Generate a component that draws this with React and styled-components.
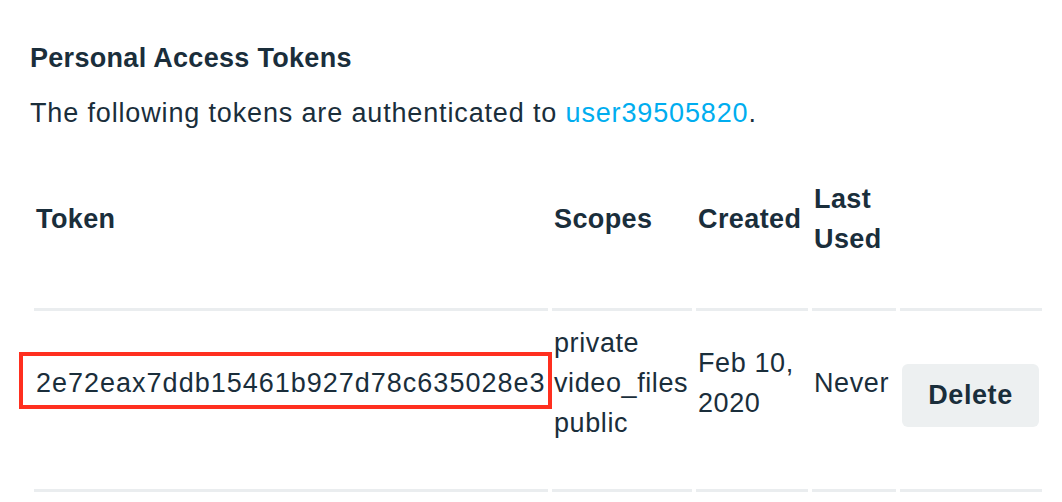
import React from "react";
import styled, { createGlobalStyle } from "styled-components";

const GlobalStyle = createGlobalStyle`
  body {
    margin: 0;
    background: #fff;
    color: #1a2e3b;
    font-family: "Liberation Sans", Arial, sans-serif;
  }
`;

const tokens = [
  {
    id: "2e72eax7ddb15461b927d78c635028e3",
    scopes: ["private", "video_files", "public"],
    created: "Feb 10, 2020",
    lastUsed: "Never",
  },
];

const App = () => {
  return (
    <Page>
      <GlobalStyle />
      <Title>Personal Access Tokens</Title>
      <Intro>
        The following tokens are authenticated to{" "}
        <UserLink href="#">user39505820</UserLink>.
      </Intro>
      <TokenTable>
        <thead>
          <tr>
            <HeaderCell $width={514}>Token</HeaderCell>
            <HeaderCell $width={140}>Scopes</HeaderCell>
            <HeaderCell $width={112}>Created</HeaderCell>
            <HeaderCell $width={84}>Last Used</HeaderCell>
            <HeaderCell $width={142} />
          </tr>
        </thead>
        <tbody>
          {tokens.map((token) => (
            <tr key={token.id}>
              <Cell>
                {/* the token is highlighted with a red annotation box */}
                <TokenValue>{token.id}</TokenValue>
              </Cell>
              <Cell>
                {token.scopes.map((scope) => (
                  <Scope key={scope}>{scope}</Scope>
                ))}
              </Cell>
              <Cell $wrap>{token.created}</Cell>
              <Cell>{token.lastUsed}</Cell>
              <Cell>
                <DeleteButton>Delete</DeleteButton>
              </Cell>
            </tr>
          ))}
        </tbody>
      </TokenTable>
    </Page>
  );
};

export default App;

const Page = styled.div`
  padding: 38px 0 0 30px;
`;

const Title = styled.h2`
  margin: 0;
  font-size: 27px;
  line-height: 40px;
  font-weight: 700;
  letter-spacing: 0.3px;
`;

const Intro = styled.p`
  margin: 15px 0 0;
  font-size: 27px;
  line-height: 40px;
  letter-spacing: 0.85px;
`;

const UserLink = styled.a`
  color: #00adef;
  text-decoration: none;
`;

const TokenTable = styled.table`
  margin-top: 26px;
  border-collapse: separate;
  border-spacing: 4px 0;
  table-layout: fixed;
  width: 1016px;
  font-size: 27px;
  line-height: 40px;
`;

const HeaderCell = styled.th`
  box-sizing: border-box;
  width: ${(p) => p.$width}px;
  padding: 20px 2px 49px;
  border-bottom: 3px solid #eaedef;
  text-align: left;
  vertical-align: middle;
  font-weight: 700;
  letter-spacing: 0.4px;
`;

const Cell = styled.td`
  padding: 12px 2px 46px;
  border-bottom: 3px solid #eaedef;
  vertical-align: middle;
  white-space: ${(p) => (p.$wrap ? "normal" : "nowrap")};
  letter-spacing: 0.6px;
`;

const TokenValue = styled.span`
  position: relative;
  letter-spacing: 1px;

  &::after {
    content: "";
    position: absolute;
    left: -17px;
    right: -7px;
    top: -16px;
    bottom: -11px;
    border: 4px solid #ff2f1f;
  }
`;

const Scope = styled.span`
  display: block;
`;

const DeleteButton = styled.button`
  display: block;
  margin-top: 24px;
  width: 137px;
  height: 63px;
  border: none;
  border-radius: 6px;
  background: #edf0f1;
  color: #1a2e3b;
  font-family: inherit;
  font-size: 27px;
  font-weight: 700;
  letter-spacing: 0.6px;
  cursor: pointer;
`;
